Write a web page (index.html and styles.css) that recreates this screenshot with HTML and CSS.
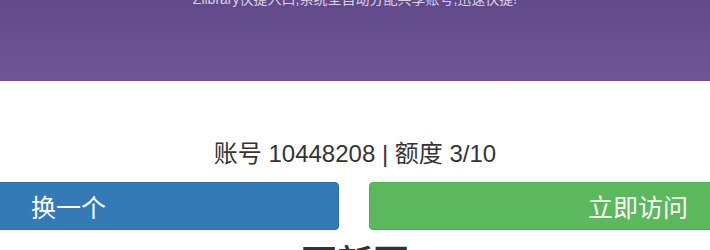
FILE: index.html
```html
<!DOCTYPE html>
<html lang="zh-CN">
<head>
<meta charset="utf-8">
<title>Zlibrary</title>
<link rel="stylesheet" href="styles.css">
</head>
<body>
<header class="hero">
  <p class="hero-sub">Zlibrary快捷入口,系统全自动分配共享账号,迅速快捷!</p>
</header>
<main class="panel">
  <p class="account">账号 10448208 | 额度 3/10</p>
  <div class="actions">
    <a class="btn btn-blue" href="#">换一个</a>
    <a class="btn btn-green" href="#">立即访问</a>
  </div>
  <h2 class="section-title">更新页</h2>
</main>
</body>
</html>
```
FILE: styles.css
```css
html, body {
  margin: 0;
  padding: 0;
  background: #fff;
  overflow: hidden;
}
body {
  font-family: "Liberation Sans", "Noto Sans CJK SC", sans-serif;
  color: #333;
}
.hero {
  height: 81px;
  background: linear-gradient(to bottom, #624a8a 0%, #6a5192 60%, #6f5596 100%);
  overflow: hidden;
}
.hero-sub {
  margin: -11px 0 0;
  text-align: center;
  font-size: 14px;
  line-height: 20px;
  color: #d9cfe8;
}
.panel {
  display: flex;
  flex-direction: column;
  align-items: stretch;
}
.account {
  margin: 57px 0 0;
  text-align: center;
  font-size: 24px;
  line-height: 32px;
  color: #333;
}
.actions {
  display: flex;
  gap: 30px;
  margin: 12px -10px 0 -12px;
}
.btn {
  flex: 0 0 calc(50% - 15px);
  height: 48px;
  box-sizing: border-box;
  display: flex;
  align-items: center;
  border-radius: 4px;
  color: #fff;
  text-decoration: none;
  font-size: 25px;
}
.btn-blue {
  background: #337ab7;
  border: 1px solid #2e6da4;
  padding-left: 42px;
  justify-content: flex-start;
}
.btn-green {
  background: #5cb85c;
  border: 1px solid #4cae4c;
  padding-right: 31px;
  justify-content: flex-end;
}
.section-title {
  margin: 14px 0 0;
  text-align: center;
  font-size: 36px;
  line-height: 40px;
  font-weight: 500;
  color: #333;
}
```
